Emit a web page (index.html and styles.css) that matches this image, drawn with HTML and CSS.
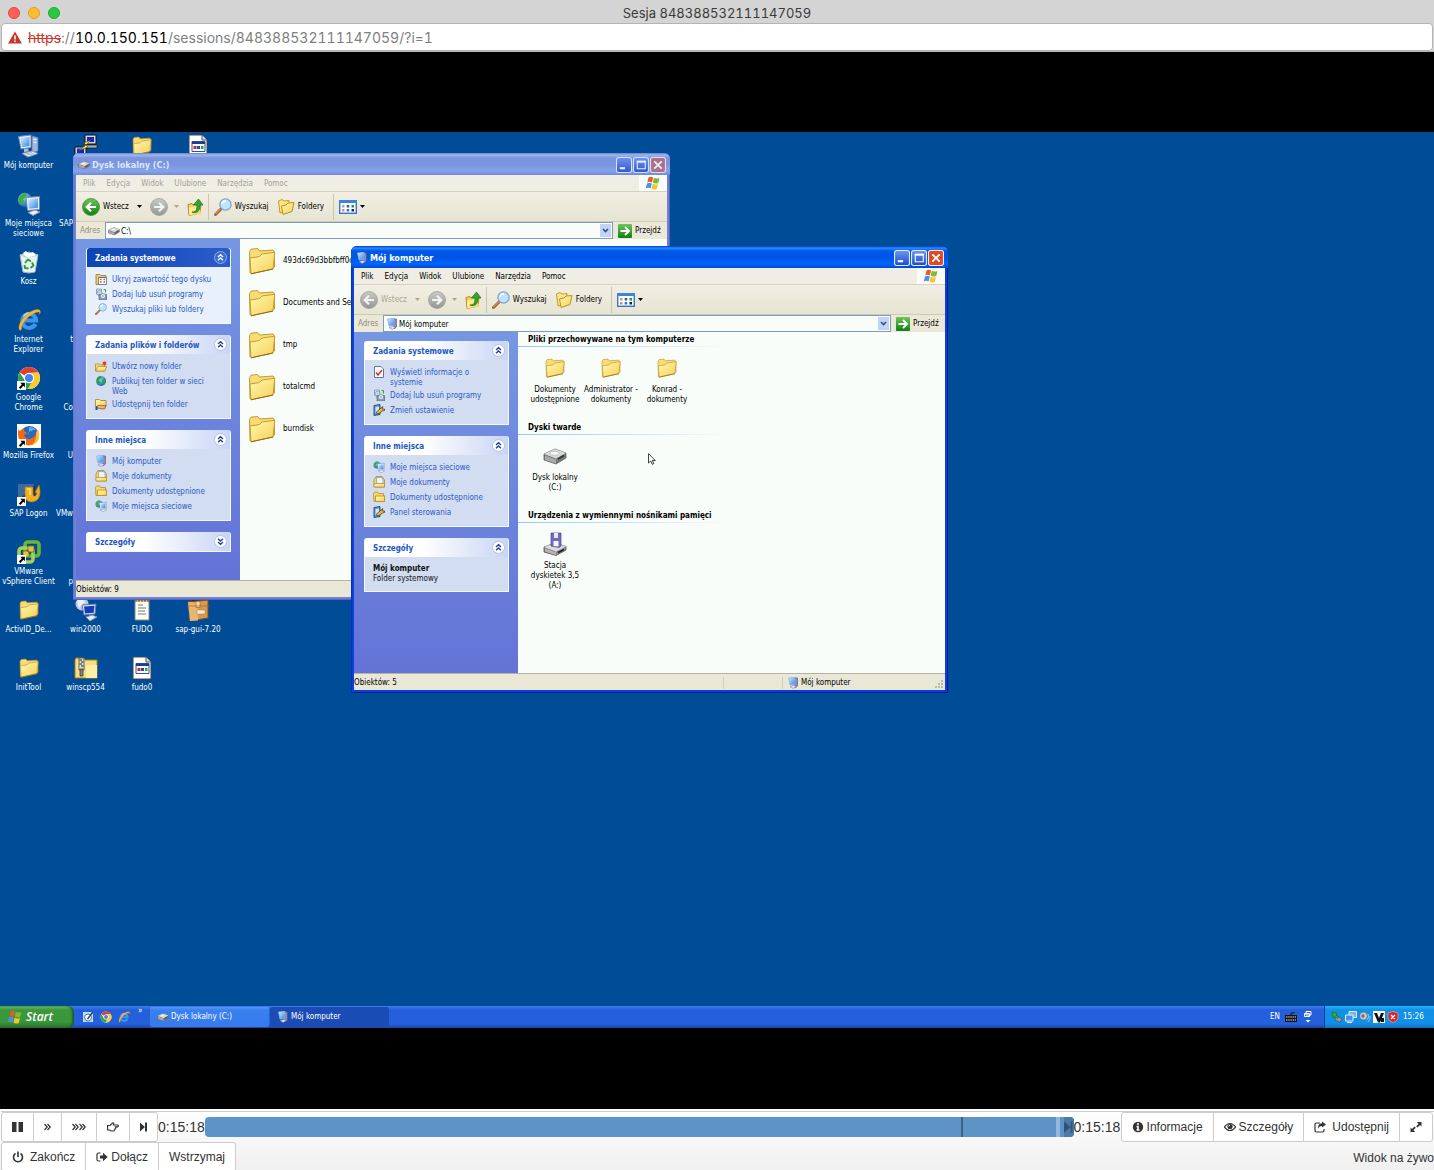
FILE: index.html
```html
<!DOCTYPE html>
<html lang="pl">
<head>
<meta charset="utf-8">
<title>Sesja 848388532111147059</title>
<link rel="stylesheet" href="styles.css">
</head>
<body>

<svg class="sprite" aria-hidden="true">
  <defs>
    <linearGradient id="gFolder" x1="0" y1="0" x2="1" y2="1"><stop offset="0" stop-color="#fff9ae"/><stop offset="1" stop-color="#f6cf58"/></linearGradient>
    <linearGradient id="gScreen" x1="0" y1="0" x2="1" y2="1"><stop offset="0" stop-color="#d9f2ff"/><stop offset="1" stop-color="#2f86e0"/></linearGradient>
    <linearGradient id="gGreen" x1="0" y1="0" x2="0" y2="1"><stop offset="0" stop-color="#6cc65c"/><stop offset="1" stop-color="#127f12"/></linearGradient>
    <linearGradient id="gGray" x1="0" y1="0" x2="0" y2="1"><stop offset="0" stop-color="#c9c9c5"/><stop offset="1" stop-color="#969692"/></linearGradient>
    <radialGradient id="gGlobe" cx=".35" cy=".3" r=".8"><stop offset="0" stop-color="#8de0ff"/><stop offset="1" stop-color="#0b50b0"/></radialGradient>
    <linearGradient id="gBlue" x1="0" y1="0" x2="0" y2="1"><stop offset="0" stop-color="#6f95f5"/><stop offset="1" stop-color="#1c4bd0"/></linearGradient>
  </defs>
  <symbol id="folder" viewBox="0 0 28 28">
    <path d="M1.500 4.500 3 2.200l6.500-.7 2 2.500L25 3l1.500 2v15L2 26z" fill="#f7dc78" stroke="#c49a2c"/>
    <path d="M2 11l9.500-1.500L14 7l12.800-1.800L25 22 3 26.800z" fill="url(#gFolder)" stroke="#c79c2e"/>
    <path d="M25 22 3 26.800" stroke="#8d6a15" fill="none"/>
  </symbol>
  <symbol id="folders" viewBox="0 0 18 18">
    <path d="M1.500 3 5 1.500 7 3l5-.5V12l-9 3z" fill="#fbe68c" stroke="#c79a25"/>
    <path d="M4.500 8 9 7l2-2 6-.5-2 9-9 3z" fill="url(#gFolder)" stroke="#c08f1e"/>
  </symbol>
  <symbol id="folder-flat" viewBox="0 0 12 12">
    <path d="M.5 2.500 1.500 1h3l1 1.500h5V5H12v5.500H1z" fill="#f5d872" stroke="#b98a1c" stroke-width=".8"/>
    <path d="M2.500 5h9v5.500h-9z" fill="url(#gFolder)" stroke="#b98a1c" stroke-width=".8"/>
  </symbol>
  <symbol id="docs-folder" viewBox="0 0 12 12">
    <path d="M1 4l2-3.500h6L11.500 4v7H1z" fill="#f5d872" stroke="#b98a1c" stroke-width=".8"/>
    <path d="M3.500 1.500h5l1.500 2V8h-6.500z" fill="#e8f4ff" stroke="#6f9ac9" stroke-width=".7"/>
    <path d="M1 7.500h10.500V11H1z" fill="url(#gFolder)" stroke="#b98a1c" stroke-width=".7"/>
  </symbol>
  <symbol id="new-folder" viewBox="0 0 12 12">
    <path d="M.5 4h4l1 1H10v6H.5z" fill="#f5d872" stroke="#b98a1c" stroke-width=".8"/><path d="M.8 11 3 6.500h9L9.800 11z" fill="url(#gFolder)" stroke="#b98a1c" stroke-width=".7"/>
    <path d="M9 .3l.7 1.700 1.800-.5-.6 1.700 1.100 1.300-1.800.1L9.500 6 8.600 4.600 7 4.400l1-1.300L7.500 1.500 9 2z" fill="#e23a1a"/>
  </symbol>
  <symbol id="share-folder" viewBox="0 0 12 12">
    <path d="M.5 1.500h4l1 1H11v6H.5z" fill="url(#gFolder)" stroke="#a97c16" stroke-width=".8"/><path d="M1 9c3-3 5-1 10-1.500L9.500 11 4 10.500z" fill="#e9b27b" stroke="#7a4b16" stroke-width=".7"/><path d="M.5 8.500h2V12h-2z" fill="#274a9a"/>
  </symbol>
  <symbol id="hide-disk" viewBox="0 0 12 12">
    <path d="M1 1.500h4l1 1h5v9H1z" fill="#f0cd62" stroke="#9b7419" stroke-width=".8"/><path d="M3.500 4.500h8v7h-8z" fill="#fff" stroke="#5b6f92" stroke-width=".8"/><path d="M5 6.500h1.500M8.500 6.500H10M5 9h1.500M8.500 9H10" stroke="#c05030" stroke-width="1.300"/><path d="M3.500 4.500h8" stroke="#3b72c8"/>
  </symbol>
  <symbol id="programs" viewBox="0 0 12 12">
    <path d="M1.500 1h5v5h-5z" fill="#dfe9f7" stroke="#7688a8" stroke-width=".7"/><circle cx="4.500" cy="5" r="2.700" fill="#c6d6ea" stroke="#6b7f9e" stroke-width=".6"/><path d="M4 6.500h7.500V12H4z" fill="#8aa0c0" stroke="#4c6285" stroke-width=".7"/><circle cx="8" cy="8" r="2.500" fill="#eef3fa" stroke="#5f7496" stroke-width=".6"/><circle cx="8" cy="8" r=".8" fill="#4f9d3a"/><path d="M8.500 1.500h2v3" fill="none" stroke="#3f9d33"/>
  </symbol>
  <symbol id="search" viewBox="0 0 18 18">
    <path d="M1.500 16.500 7 11" stroke="#a8643b" stroke-width="3" stroke-linecap="round"/><path d="M1.500 16 6.500 11" stroke="#e4a57c" stroke-width="1"/>
    <circle cx="11.500" cy="6.500" r="5.600" fill="#bfe3fb" stroke="#7fa6d0" stroke-width="1.300"/><path d="M8 6a4 4 0 0 1 4-3.200" stroke="#fff" stroke-width="1.800" fill="none"/>
  </symbol>
  <symbol id="info-doc" viewBox="0 0 12 12">
    <path d="M1.500.5H8L10.500 3v8.500h-9z" fill="#fff" stroke="#5d78a8"/><path d="M3 6.500 5 9l4-5" fill="none" stroke="#e0361d" stroke-width="1.600"/>
  </symbol>
  <symbol id="settings" viewBox="0 0 12 12">
    <path d="M1 1.500 7 .5v10L1 11.500z" fill="#5c94dd" stroke="#27446f" stroke-width=".9"/><path d="M2.500 3 6 2.500v6L2.500 9z" fill="#cfe6ff"/><path d="M3 8.500 8 4l2-1.500L9 5h2.500v1.500L9.500 7 5 10z" fill="#f0b93c" stroke="#3b3320" stroke-width=".7"/>
  </symbol>
  <symbol id="globe" viewBox="0 0 12 12">
    <circle cx="6" cy="6" r="5" fill="url(#gGlobe)"/><path d="M2 3q2-2.500 4-2l.5 2L4 5 5 8 3 9.500Q.8 7 2 3zM8 4l3 .5q.3 3-2 5.500L7 7.500z" fill="#31a238"/>
  </symbol>
  <symbol id="computer" viewBox="0 0 24 24">
    <path d="M15 2l6 1.500V17l-6 2z" fill="#9fb6de" stroke="#5773ac" stroke-width=".8"/><path d="M16.500 5l3 .7M16.500 8l3 .5" stroke="#fff"/>
    <path d="M1.500 2.500 14 1v12.500L4 15z" fill="#e9eef9" stroke="#7387b5"/><path d="M3.200 4 12.500 3v9L5 13.200z" fill="url(#gScreen)"/>
    <path d="M7 15l4-.5 1 3-5 .5z" fill="#b0bad4"/><path d="M5 19.500 15 17l6 2.500L11 23z" fill="#eef1f9" stroke="#8a96b8"/><path d="M8 20l7-1.500M10 21l7-1.500" stroke="#a9b2cb"/>
  </symbol>
  <symbol id="pc" viewBox="0 0 12 12">
    <path d="M7.500.7 10.500 1v8L8 11z" fill="#8c86c0" stroke="#534e89" stroke-width=".6"/><path d="M1.500 1 8 .3V7.500L3 8z" fill="url(#gScreen)" stroke="#8fb4e4" stroke-width=".8"/><path d="M3 9.500 7 8.500l2.500 1L6 11.500z" fill="#e7e9f5" stroke="#7d7ba5" stroke-width=".6"/>
  </symbol>
  <symbol id="network" viewBox="0 0 24 24">
    <circle cx="8" cy="8" r="7.200" fill="url(#gGlobe)"/><path d="M3 4q4-4 7-2.500L9 5 6 7l2 4-3 2Q-.5 9 3 4z" fill="#3fae3d"/>
    <path d="M9 5.500 22.500 4.500v13L10.500 18.500z" fill="#e9eef9" stroke="#6f86b8"/><path d="M11 7.200 21 6.300v9.500l-9 .9z" fill="url(#gScreen)"/><path d="M11 20.500l7-2.500 5 2-7 3.500z" fill="#eef1f9" stroke="#8490b5"/>
  </symbol>
  <symbol id="recycle" viewBox="0 0 24 24">
    <path d="M3 5l9-3 9 3-3 17-6 1-6-1z" fill="#e9f3f7" stroke="#9db8c8"/><path d="M3 5l8 2.500L21 5" fill="none" stroke="#b7ccd8"/><path d="M6 3l3-2 3 3 4-2 3 3-8 3z" fill="#fff"/>
    <path d="M8 13l3-3.500 3 2M15 12.500l1.500 3-3 2.500M11.500 18.500 8 18l-.5-3" fill="none" stroke="#26a032" stroke-width="1.900"/>
  </symbol>
  <symbol id="ie" viewBox="0 0 24 24">
    <path d="M18.500 16A7 7 0 1 1 19.200 12.500H7" fill="none" stroke="#3c97ec" stroke-width="4"/><path d="M6.500 8.500q3-5 9-3" stroke="#b9e4ff" stroke-width="1.400" fill="none"/>
    <path d="M3.500 22.500C-2 20 8 3 20 1.500c4.500-.5 3.500 3.500 2.500 5 .5-3-1-3-3.500-2C11 7 3.500 17 4.800 20.500z" fill="#f4b92f" stroke="#d6900f" stroke-width=".4"/>
  </symbol>
  <symbol id="chrome" viewBox="0 0 24 24">
    <circle cx="12" cy="12" r="11" fill="#fff"/><path d="M12 12 2.500 6.500A11 11 0 0 1 21.500 6.500L12 7z" fill="#e2402f"/><path d="M2.500 6.500A11 11 0 0 0 11 23l5-8.500-4-2.500-5 1z" fill="#2da24c"/><path d="M21.500 6.500A11 11 0 0 1 11 23l6-11-3-5z" fill="#fbcb2f"/><circle cx="12" cy="12" r="5.200" fill="#fff"/><circle cx="12" cy="12" r="4" fill="#4285f4"/>
  </symbol>
  <symbol id="firefox" viewBox="0 0 24 24">
    <path d="M0 0h24v24H0z" fill="#fff"/><circle cx="12.500" cy="11.500" r="9.500" fill="#2c68b8"/><path d="M12 3q5 0 7 3-3-1-4 1-5 0-3 4z" fill="#55b4ec"/>
    <path d="M2 4c0 2 0 2.500 1 3 1-1.500 2-2 4-2-.5 1.500 0 2.500 2 3l1 1.500-3 1.500c1 4 5 5 8 3 3-1.500 5-4 4-9 3 3 4 7 2 11-3 6-11 7-16 3-4-3-5-9-3-15z" fill="#ef6a17"/><path d="M21 6c3 5 1 13-6 15 3-3 5-7 4-12z" fill="#fbc12f"/>
  </symbol>
  <symbol id="sap" viewBox="0 0 24 24">
    <path d="M1 2h17v17H1z" fill="#163a63"/><path d="M1 2h17L1 19z" fill="#3d6b9c"/><path d="M8 5h8v7c0 3 3 3 4-1l-2-.5L22 3c2 7 2 16-7 17-6 0-7-4-7-9z" fill="#f3ae21" stroke="#b77405" stroke-width=".7"/><path d="M10 7h3v6" stroke="#ffe08a" fill="none" stroke-width="1.500"/>
  </symbol>
  <symbol id="vmware" viewBox="0 0 24 24">
    <rect x="8" y="2" width="14" height="14" rx="3" fill="none" stroke="#6bb536" stroke-width="3.600"/><rect x="2" y="8" width="14" height="14" rx="3" fill="none" stroke="#a4cf5c" stroke-width="3.600"/><path d="M11 6h6v6h-6zM6 11h6v6H6z" fill="#f9b93a" stroke="#4b7320" stroke-width=".8"/>
  </symbol>
  <symbol id="putty" viewBox="0 0 24 24">
    <path d="M11 1h11v9H11zM1 13h11v8H1z" fill="#d9d9d9" stroke="#111"/><path d="M13 3h7v5h-7zM3 14.500h7V19H3z" fill="#1424c8"/><path d="M11 11h12v3H11zM1 21h12v2H1z" fill="#aaa" stroke="#111" stroke-width=".6"/><path d="M17 6 10 9l2 2-8 6 10-4-2-2z" fill="#ffe81c" stroke="#333" stroke-width=".5"/>
  </symbol>
  <symbol id="image-doc" viewBox="0 0 24 24">
    <path d="M3 1h13l5 5v17H3z" fill="#fff" stroke="#444"/><path d="M16 1v5h5" fill="#ddd" stroke="#555"/><path d="M6 7.500h13v10H6z" fill="#fff" stroke="#2b56a8"/><path d="M6 7.500h13v2.500H6z" fill="#203c88"/><path d="M7.500 12h3v3h-3z" fill="#d22"/><path d="M11 12h3v3h-3z" fill="#34b"/><path d="M15 12h2.500v3H15z" fill="#2a4"/>
  </symbol>
  <symbol id="notes" viewBox="0 0 24 24">
    <path d="M5 2h14v20H5z" fill="#fdfdf6" stroke="#888"/><path d="M5 1.500h14v2H5z" fill="#c9a53a"/><path d="M6 1v3M9 1v3M12 1v3M15 1v3M18 1v3" stroke="#333" stroke-width=".8"/><path d="M8 7h5M8 10h8M8 13h7M8 16h8" stroke="#777"/>
  </symbol>
  <symbol id="rdp" viewBox="0 0 24 24">
    <circle cx="8" cy="6" r="6.500" fill="#b9cbe4"/><path d="M3 3q5-4 8 1l-6 6z" fill="#eaf2fc"/><path d="M8 7l14-1-1 10-11 1z" fill="#dfe5f3" stroke="#6077a8"/><path d="M10 8.500l10.500-.8-.8 7-8.700.7z" fill="#173cba"/><path d="M12 19l6-2 5 2-7 4z" fill="#e5e9f4" stroke="#8290b5"/>
  </symbol>
  <symbol id="box" viewBox="0 0 24 24">
    <path d="M6 0h12v8H6z" fill="#1c2d57"/><path d="M2 4l20-2v18L4 23z" fill="#d89a52" stroke="#7f4e1a"/><path d="M2 4l10 1v17.500L4 23z" fill="#e9b672"/><path d="M10 3.500h4v6h-4zM1 8h22" fill="#f5dfae" stroke="#9d6729" stroke-width=".7"/><path d="M11 12h8v4h-8z" fill="#f6ead2" stroke="#a87a40" stroke-width=".5"/>
  </symbol>
  <symbol id="zip" viewBox="0 0 24 24">
    <path d="M1 4l1-2h8l1 2h12v18H1z" fill="#f6df83" stroke="#a98119"/><path d="M12 9h11v13H12z" fill="#fbeea9"/><path d="M5 2h5v12H5z" fill="#ddd" stroke="#333" stroke-width=".7"/><path d="M5.500 4H8M7 6h2.500M5.500 8H8M7 10h2.500" stroke="#222"/><path d="M6 13h3v7H6z" fill="#888" stroke="#222" stroke-width=".7"/>
  </symbol>
  <symbol id="shortcut-arrow" viewBox="0 0 8 8"><path d="M0 0h8v8H0z" fill="#fff"/><path d="M3 1.500h4v4L5.700 4.300 3 7 1.700 5.700 4.300 3z" fill="#000"/></symbol>
  <symbol id="drive" viewBox="0 0 24 24">
    <path d="M1 10 12 5l11 4v5l-10 6-12-4z" fill="#777" stroke="#666" stroke-width=".8"/><path d="M1 10 12 5l11 4-10 5.500z" fill="#d9d9d9"/><path d="M2 11.500l11 4v4l-11-3.500z" fill="#a9a9a9"/><path d="M15 15l6-3.500" stroke="#333" stroke-width="1.500"/><ellipse cx="11.500" cy="9.300" rx="4.500" ry="2" fill="#fafafa" stroke="#aaa" stroke-width=".6"/>
  </symbol>
  <symbol id="floppy-drive" viewBox="0 0 24 24">
    <path d="M1 15l11-4 11 3.500V18l-10 5.500L1 20z" fill="#8c8c8c" stroke="#555" stroke-width=".8"/><path d="M1 15l11-4 11 3.500-10 5z" fill="#dcdcdc"/><path d="M2 16.500l11 4v2.500L2 19.500z" fill="#b5b5b5"/><path d="M15 20.500l6-3" stroke="#222" stroke-width="1.500"/>
    <path d="M8 1h10v13l-2 1.500L8 14z" fill="#6f6bc4" stroke="#4d4a95" stroke-width=".7"/><path d="M11 1h4v5h-4z" fill="#e6e9f7"/><path d="M10.500 9h5v5.500l-5-.5z" fill="#f5f5fb"/>
  </symbol>
  <symbol id="back" viewBox="0 0 18 18"><circle cx="9" cy="9" r="8.500" fill="url(#gGreen)" stroke="#2c8a28" stroke-width=".7"/><path d="M14 9H5M9 4.700 4.700 9 9 13.300" fill="none" stroke="#fff" stroke-width="2.200"/></symbol>
  <symbol id="back-off" viewBox="0 0 18 18"><circle cx="9" cy="9" r="8.500" fill="url(#gGray)" stroke="#9a9a96" stroke-width=".7"/><path d="M14 9H5M9 4.700 4.700 9 9 13.300" fill="none" stroke="#f4f4ef" stroke-width="2.200"/></symbol>
  <symbol id="forward-off" viewBox="0 0 18 18"><circle cx="9" cy="9" r="8.500" fill="url(#gGray)" stroke="#9a9a96" stroke-width=".7"/><path d="M4 9h9M9 4.700 13.300 9 9 13.300" fill="none" stroke="#f4f4ef" stroke-width="2.200"/></symbol>
  <symbol id="up" viewBox="0 0 18 18"><path d="M2 6.500l4-1 1 1.500 8-1-1 9-11 2.500z" fill="#f3d369" stroke="#b98a1c"/><path d="M3 10l10-2.500 2 8L3 17.500z" fill="url(#gFolder)"/><path d="M6 14c4 0 5-2 5-7H7.500L12.500 1 17 7h-3c0 6-3 9-8 7z" fill="#35a52c" stroke="#15701a" stroke-width=".7"/></symbol>
  <symbol id="views" viewBox="0 0 18 14"><rect x=".7" y=".7" width="16.600" height="12.600" fill="#fff" stroke="#2f76d0" stroke-width="1.400"/><path d="M0 0h18v3H0z" fill="#3c83dc"/><path d="M3 5h2.500v2.500H3z" fill="#9aa7c0"/><path d="M7.700 5h2.500v2.500H7.700z" fill="#3658b5"/><path d="M12.500 5H15v2.500h-2.500z" fill="#1e9b3c"/><path d="M3 9h2.500v2.500H3z" fill="#e2856b"/><path d="M7.700 9h2.500v2.500H7.700z" fill="#2f6fd0"/><path d="M12.500 9H15v2.500h-2.500z" fill="#223"/></symbol>
  <symbol id="go" viewBox="0 0 14 14"><rect width="14" height="14" rx="1" fill="url(#gGreen)"/><path d="M2.500 7h8M7 3l4 4-4 4" fill="none" stroke="#fff" stroke-width="1.800"/></symbol>
  <symbol id="caret" viewBox="0 0 5 3"><path d="M0 0h5L2.500 3z" fill="currentColor"/></symbol>
  <symbol id="chevrons-up" viewBox="0 0 13 13"><circle cx="6.500" cy="6.500" r="6" fill="#fff" stroke="#b5c2e4"/><path d="M4 6l2.500-2.300L9 6M4 9.300 6.500 7 9 9.300" fill="none" stroke="#1d3f94" stroke-width="1.300"/></symbol>
  <symbol id="chevrons-up-light" viewBox="0 0 13 13"><circle cx="6.500" cy="6.500" r="6" fill="#3d6cd0" stroke="#8eaef0"/><path d="M4 6l2.500-2.300L9 6M4 9.300 6.500 7 9 9.300" fill="none" stroke="#fff" stroke-width="1.300"/></symbol>
  <symbol id="chevrons-down" viewBox="0 0 13 13"><circle cx="6.500" cy="6.500" r="6" fill="#fff" stroke="#b5c2e4"/><path d="M4 3.700 6.500 6 9 3.700M4 7l2.500 2.300L9 7" fill="none" stroke="#1d3f94" stroke-width="1.300"/></symbol>
  <symbol id="flag" viewBox="0 0 16 14">
    <path d="M3.500 1.500Q6 0 8 1.500L7 6.500Q4.500 5 2.300 6.500z" fill="#e9592b"/><path d="M8.800 1.800Q11.500 3.300 14.500 2L13.300 7Q10.500 8.300 7.800 6.800z" fill="#7fba33"/><path d="M2 7.500Q4.500 6 6.800 7.500L5.700 12.300Q3.200 11 .8 12.300z" fill="#4c90e0"/><path d="M7.600 7.800Q10.200 9.300 13 8L11.800 13Q9 14.200 6.500 12.700z" fill="#f7c52b"/>
  </symbol>
  <symbol id="win-min" viewBox="0 0 15 15"><rect x=".5" y=".5" width="14" height="14" rx="2" fill="url(#gBlue)" stroke="#e6edff"/><path d="M3.500 10.500h5" stroke="#fff" stroke-width="2"/></symbol>
  <symbol id="win-max" viewBox="0 0 15 15"><rect x=".5" y=".5" width="14" height="14" rx="2" fill="url(#gBlue)" stroke="#e6edff"/><path d="M4 4.500h7.500v6.500H4z" fill="none" stroke="#fff"/><path d="M3.500 4.300h8.500" stroke="#fff" stroke-width="1.800"/></symbol>
  <symbol id="win-close" viewBox="0 0 15 15"><rect x=".5" y=".5" width="14" height="14" rx="2" fill="currentColor" stroke="#f6ebe8"/><path d="M4 4l7 7M11 4l-7 7" stroke="#fff" stroke-width="1.700"/></symbol>
  <symbol id="pointer" viewBox="0 0 8 12"><path d="M.5.7v9.300l2.200-2 1.500 3.300 1.500-.7-1.400-3.100h3z" fill="#fff" stroke="#111" stroke-width=".8"/></symbol>
</svg>

<header class="browser">
  <div class="browser-title">
    <div class="lights"><button class="light light-red" aria-label="Zamknij"></button><button class="light light-yellow" aria-label="Minimalizuj"></button><button class="light light-green" aria-label="Powiększ"></button></div>
    <h1>Sesja 848388532111147059</h1>
  </div>
  <div class="url">
    <svg class="warn" viewBox="0 0 14 13"><path d="M7 .5 14 12.500H0z" fill="#c5392a"/><path d="M7 4.500v4M7 9.500v1.600" stroke="#fff" stroke-width="1.500"/></svg>
    <span><s>https</s>://<b>10.0.150.151</b>/sessions/848388532111147059/?i=1</span>
  </div>
</header>

<main class="viewer">
  <div class="desktop">
    <div class="workspace">
      <div class="shortcuts">
        <button class="shortcut"><svg><use href="#computer"/></svg>Mój komputer</button>
        <button class="shortcut"><svg><use href="#network"/></svg>Moje miejsca sieciowe</button>
        <button class="shortcut"><svg><use href="#recycle"/></svg>Kosz</button>
        <button class="shortcut"><svg><use href="#ie"/></svg>Internet Explorer</button>
        <button class="shortcut"><svg><use href="#chrome"/><use href="#shortcut-arrow" x="0" y="15" width="9" height="9"/></svg>Google Chrome</button>
        <button class="shortcut"><svg><use href="#firefox"/><use href="#shortcut-arrow" x="0" y="15" width="9" height="9"/></svg>Mozilla Firefox</button>
        <button class="shortcut"><svg><use href="#sap"/><use href="#shortcut-arrow" x="0" y="15" width="9" height="9"/></svg>SAP Logon</button>
        <button class="shortcut"><svg><use href="#vmware"/><use href="#shortcut-arrow" x="0" y="15" width="9" height="9"/></svg>VMware vSphere Client</button>
        <button class="shortcut small"><svg><use href="#folder"/></svg>ActivID_De...</button>
        <button class="shortcut small"><svg><use href="#folder"/></svg>InitTool</button>
        <button class="shortcut" aria-label="PuTTY"><svg><use href="#putty"/></svg></button>
        <button class="shortcut covered">SAP</button>
        <span></span>
        <button class="shortcut covered">t</button>
        <button class="shortcut covered second-line">Co</button>
        <button class="shortcut covered">U</button>
        <button class="shortcut covered">VMw</button>
        <button class="shortcut covered second-line">p</button>
        <button class="shortcut"><svg><use href="#rdp"/></svg>win2000</button>
        <button class="shortcut"><svg><use href="#zip"/></svg>winscp554</button>
        <button class="shortcut small" aria-label="Folder"><svg><use href="#folder"/></svg></button>
        <button class="shortcut row-9"><svg><use href="#notes"/></svg>FUDO</button>
        <button class="shortcut"><svg><use href="#image-doc"/></svg>fudo0</button>
        <button class="shortcut" aria-label="Obraz"><svg><use href="#image-doc"/></svg></button>
        <button class="shortcut row-9"><svg><use href="#box"/></svg>sap-gui-7.20</button>
      </div>

      <section class="window inactive disk">
        <header class="title"><svg class="i12"><use href="#drive"/></svg><h2>Dysk lokalny (C:)</h2>
          <button aria-label="Minimalizuj"><svg><use href="#win-min"/></svg></button><button aria-label="Maksymalizuj"><svg><use href="#win-max"/></svg></button><button class="close" aria-label="Zamknij"><svg><use href="#win-close"/></svg></button>
        </header>
        <nav class="menu"><button>Plik</button><button>Edycja</button><button>Widok</button><button>Ulubione</button><button>Narzędzia</button><button>Pomoc</button><span class="brand"><svg><use href="#flag"/></svg></span></nav>
        <div class="toolbar">
          <button class="tool"><svg class="i18"><use href="#back"/></svg>Wstecz</button><button class="drop" aria-label="Historia wstecz"><svg><use href="#caret"/></svg></button>
          <button class="tool off" aria-label="Dalej"><svg class="i18"><use href="#forward-off"/></svg></button><button class="drop short off" aria-label="Historia dalej"><svg><use href="#caret"/></svg></button>
          <button class="tool" aria-label="W górę"><svg class="i18"><use href="#up"/></svg></button>
          <i class="sep"></i>
          <button class="tool"><svg class="i18"><use href="#search"/></svg>Wyszukaj</button>
          <button class="tool folders"><svg class="i18"><use href="#folders"/></svg>Foldery</button>
          <i class="sep"></i>
          <button class="tool views" aria-label="Widoki"><svg class="i18"><use href="#views"/></svg><svg class="caret"><use href="#caret"/></svg></button>
        </div>
        <div class="address">
          <label for="addr1">Adres</label>
          <div class="field"><svg class="i12"><use href="#drive"/></svg><input id="addr1" value="C:\"><button class="pick" aria-label="Rozwiń"><svg viewBox="0 0 11 13"><path d="M3 5l2.500 2.500L8 5" fill="none" stroke="#35517f" stroke-width="1.600"/></svg></button></div>
          <button class="go"><svg><use href="#go"/></svg>Przejdź</button>
        </div>
        <div class="explorer">
          <aside>
            <section class="panel primary">
              <h3>Zadania systemowe<svg><use href="#chevrons-up-light"/></svg></h3>
              <ul>
                <li><svg class="i12"><use href="#hide-disk"/></svg><a href="#">Ukryj zawartość tego dysku</a></li>
                <li><svg class="i12"><use href="#programs"/></svg><a href="#">Dodaj lub usuń programy</a></li>
                <li><svg class="i12"><use href="#search"/></svg><a href="#">Wyszukaj pliki lub foldery</a></li>
              </ul>
            </section>
            <section class="panel">
              <h3>Zadania plików i folderów<svg><use href="#chevrons-up"/></svg></h3>
              <ul>
                <li><svg class="i12"><use href="#new-folder"/></svg><a href="#">Utwórz nowy folder</a></li>
                <li><svg class="i12"><use href="#globe"/></svg><a href="#">Publikuj ten folder w sieci Web</a></li>
                <li><svg class="i12"><use href="#share-folder"/></svg><a href="#">Udostępnij ten folder</a></li>
              </ul>
            </section>
            <section class="panel">
              <h3>Inne miejsca<svg><use href="#chevrons-up"/></svg></h3>
              <ul>
                <li><svg class="i12"><use href="#pc"/></svg><a href="#">Mój komputer</a></li>
                <li><svg class="i12"><use href="#docs-folder"/></svg><a href="#">Moje dokumenty</a></li>
                <li><svg class="i12"><use href="#folder-flat"/></svg><a href="#">Dokumenty udostępnione</a></li>
                <li><svg class="i12"><use href="#network"/></svg><a href="#">Moje miejsca sieciowe</a></li>
              </ul>
            </section>
            <section class="panel"><h3>Szczegóły<svg><use href="#chevrons-down"/></svg></h3></section>
          </aside>
          <div class="files">
            <button><svg><use href="#folder"/></svg>493dc69d3bbfbff0c</button>
            <button><svg><use href="#folder"/></svg>Documents and Settings</button>
            <button><svg><use href="#folder"/></svg>tmp</button>
            <button><svg><use href="#folder"/></svg>totalcmd</button>
            <button><svg><use href="#folder"/></svg>burndisk</button>
          </div>
        </div>
        <footer class="status"><span>Obiektów: 9</span></footer>
      </section>

      <section class="window mycomputer">
        <header class="title"><svg class="i12"><use href="#pc"/></svg><h2>Mój komputer</h2>
          <button aria-label="Minimalizuj"><svg><use href="#win-min"/></svg></button><button aria-label="Maksymalizuj"><svg><use href="#win-max"/></svg></button><button class="close" aria-label="Zamknij"><svg><use href="#win-close"/></svg></button>
        </header>
        <nav class="menu"><button>Plik</button><button>Edycja</button><button>Widok</button><button>Ulubione</button><button>Narzędzia</button><button>Pomoc</button><span class="brand"><svg><use href="#flag"/></svg></span></nav>
        <div class="toolbar">
          <button class="tool off"><svg class="i18"><use href="#back-off"/></svg>Wstecz</button><button class="drop off" aria-label="Historia wstecz"><svg><use href="#caret"/></svg></button>
          <button class="tool off" aria-label="Dalej"><svg class="i18"><use href="#forward-off"/></svg></button><button class="drop short off" aria-label="Historia dalej"><svg><use href="#caret"/></svg></button>
          <button class="tool" aria-label="W górę"><svg class="i18"><use href="#up"/></svg></button>
          <i class="sep"></i>
          <button class="tool"><svg class="i18"><use href="#search"/></svg>Wyszukaj</button>
          <button class="tool folders"><svg class="i18"><use href="#folders"/></svg>Foldery</button>
          <i class="sep"></i>
          <button class="tool views" aria-label="Widoki"><svg class="i18"><use href="#views"/></svg><svg class="caret"><use href="#caret"/></svg></button>
        </div>
        <div class="address">
          <label for="addr2">Adres</label>
          <div class="field"><svg class="i12"><use href="#pc"/></svg><input id="addr2" value="Mój komputer"><button class="pick" aria-label="Rozwiń"><svg viewBox="0 0 11 13"><path d="M3 5l2.500 2.500L8 5" fill="none" stroke="#35517f" stroke-width="1.600"/></svg></button></div>
          <button class="go"><svg><use href="#go"/></svg>Przejdź</button>
        </div>
        <div class="explorer">
          <aside>
            <section class="panel">
              <h3>Zadania systemowe<svg><use href="#chevrons-up"/></svg></h3>
              <ul>
                <li><svg class="i12"><use href="#info-doc"/></svg><a href="#">Wyświetl informacje o systemie</a></li>
                <li><svg class="i12"><use href="#programs"/></svg><a href="#">Dodaj lub usuń programy</a></li>
                <li><svg class="i12"><use href="#settings"/></svg><a href="#">Zmień ustawienie</a></li>
              </ul>
            </section>
            <section class="panel">
              <h3>Inne miejsca<svg><use href="#chevrons-up"/></svg></h3>
              <ul>
                <li><svg class="i12"><use href="#network"/></svg><a href="#">Moje miejsca sieciowe</a></li>
                <li><svg class="i12"><use href="#docs-folder"/></svg><a href="#">Moje dokumenty</a></li>
                <li><svg class="i12"><use href="#folder-flat"/></svg><a href="#">Dokumenty udostępnione</a></li>
                <li><svg class="i12"><use href="#settings"/></svg><a href="#">Panel sterowania</a></li>
              </ul>
            </section>
            <section class="panel">
              <h3>Szczegóły<svg><use href="#chevrons-up"/></svg></h3>
              <p><b>Mój komputer</b><br>Folder systemowy</p>
            </section>
          </aside>
          <div class="groups">
            <section class="group"><h3>Pliki przechowywane na tym komputerze</h3>
              <div class="tiles">
                <button class="tile small"><svg><use href="#folder"/></svg>Dokumenty udostępnione</button>
                <button class="tile small"><svg><use href="#folder"/></svg>Administrator - dokumenty</button>
                <button class="tile small"><svg><use href="#folder"/></svg>Konrad - dokumenty</button>
              </div>
            </section>
            <section class="group"><h3>Dyski twarde</h3>
              <div class="tiles"><button class="tile"><svg><use href="#drive"/></svg>Dysk lokalny (C:)</button></div>
            </section>
            <section class="group"><h3>Urządzenia z wymiennymi nośnikami pamięci</h3>
              <div class="tiles"><button class="tile"><svg><use href="#floppy-drive"/></svg>Stacja dyskietek 3,5 (A:)</button></div>
            </section>
          </div>
        </div>
        <footer class="status"><span>Obiektów: 5</span><i></i><span class="zone"><svg class="i12"><use href="#pc"/></svg>Mój komputer</span>
          <svg class="grip" viewBox="0 0 8 8"><path d="M6 0h2v2H6zM3 3h2v2H3zM6 3h2v2H6zM0 6h2v2H0zM3 6h2v2H3zM6 6h2v2H6z" fill="#bdb9a2"/></svg></footer>
      </section>

      <svg class="pointer"><use href="#pointer"/></svg>
    </div>

    <footer class="taskbar">
      <button class="start"><svg><use href="#flag"/></svg>Start</button>
      <div class="quick">
        <button aria-label="Pokaż pulpit"><svg class="i12" viewBox="0 0 12 12"><path d="M1 1h8l2 2v8H1z" fill="#bfe0f8"/><circle cx="6" cy="6.500" r="3.500" fill="#fff" stroke="#3c6fb0"/><path d="M5.500 8 10.500 1.500" stroke="#345" stroke-width="1.400"/></svg></button>
        <button aria-label="Chrome"><svg class="i12"><use href="#chrome"/></svg></button>
        <button aria-label="Internet Explorer"><svg class="i12"><use href="#ie"/></svg></button>
        <span>»</span>
      </div>
      <button class="task"><svg class="i12"><use href="#drive"/></svg>Dysk lokalny (C:)</button>
      <button class="task pressed"><svg class="i12"><use href="#pc"/></svg>Mój komputer</button>
      <div class="lang"><span>EN</span>
        <svg class="i12" viewBox="0 0 12 12"><path d="M0 4h12v7H0z" fill="#111"/><path d="M1 6h10M1 9h10" stroke="#dfe8f5" stroke-width="1.200" stroke-dasharray="1.500 .7"/><path d="M6 4V2h3V1" stroke="#111" fill="none"/></svg>
        <svg class="i12" viewBox="0 0 12 12"><path d="M4 .5h5v3.500H4zM2.500 2.500h5v3h-5z" fill="#2a5ed4" stroke="#fff"/><path d="M3.500 9h5L6 11.500z" fill="#fff"/></svg>
      </div>
      <div class="tray">
        <svg class="i12" viewBox="0 0 12 12"><path d="M5 4l6 4-2 3.500L4 9z" fill="#8e9aa8" stroke="#3c4653" stroke-width=".6"/><path d="M1 1l5 1-1 2 3 2-1.500 1.500-3-2L2 7z" fill="#2fb02f" stroke="#126512" stroke-width=".5"/></svg>
        <svg class="i12" viewBox="0 0 12 12"><path d="M4 .5h7.500v6H4z" fill="#78b6ee" stroke="#dcebfa"/><path d="M.5 4H8v6H.5z" fill="#4a90e0" stroke="#e6f0fb"/><path d="M2 11.500h5" stroke="#dbe5f2"/></svg>
        <svg class="i12" viewBox="0 0 12 12"><circle cx="4.500" cy="5" r="4" fill="#c5cad2" stroke="#5a626e" stroke-width=".7"/><circle cx="4" cy="5" r="1.700" fill="#6a7280"/><path d="M9 3q2 3-1 6M11 5q1 3-2 6" fill="none" stroke="#a9c4ea" stroke-width=".9"/></svg>
        <svg class="i12" viewBox="0 0 12 12"><path d="M0 0h12v12H0z" fill="#fff"/><path d="M1 2h3l2 5 2-5h3L7 11.500H5z" fill="#111"/><path d="M8 7h3v4H8z" fill="#111"/></svg>
        <svg class="i12" viewBox="0 0 12 12"><path d="M6 .5 11 2v4q0 4-5 5.500Q1 10 1 6V2z" fill="#d8242c" stroke="#f4b3b3" stroke-width=".6"/><path d="M4 4l4 4M8 4 4 8" stroke="#fff" stroke-width="1.400"/></svg>
        <time>15:26</time>
      </div>
    </footer>
  </div>
</main>

<footer class="controls">
  <div class="row">
    <div class="group-buttons">
      <button aria-label="Pauza"><svg viewBox="0 0 11 12"><path d="M0 1h4.500v10H0zM6.500 1H11v10H6.500z"/></svg></button>
      <button aria-label="Szybciej"><svg viewBox="0 0 7 12"><path d="M.5 3l2.700 3-2.700 3M3.500 3l2.700 3-2.700 3" class="line"/></svg></button>
      <button aria-label="Najszybciej"><svg viewBox="0 0 14 12"><path d="M.5 3l2.700 3-2.700 3M3.500 3l2.700 3-2.700 3M7.500 3l2.700 3-2.700 3M10.500 3l2.700 3-2.700 3" class="line"/></svg></button>
      <button aria-label="Krok"><svg viewBox="0 0 12 12"><path d="M.6 4.500H3L5.500 2Q7.300 1.500 6.500 4h4.300q1.200.9 0 1.800H8.500q.8.900-.3 1.700.3 1-.7 1.400 0 1.100-1.200 1.100H4L2.700 9H.6z" class="line"/></svg></button>
      <button aria-label="Na koniec"><svg viewBox="0 0 7 12"><path d="M0 1.500 5 6V1.500h2v9H5V6l-5 4.500z"/></svg></button>
    </div>
    <time>0:15:18</time>
    <div class="timeline">
      <input type="range" min="0" max="918" value="918" aria-label="Pozycja nagrania">
      <i class="mark"></i><i class="mark light-mark"></i>
      <svg class="end" viewBox="0 0 10 14"><path d="M0 1l7.500 6L0 13zM7.500 1h2v12h-2z"/></svg>
    </div>
    <time>0:15:18</time>
    <div class="group-buttons">
      <button><svg viewBox="0 0 12 12"><circle cx="6" cy="6" r="5.200"/><path d="M6 2v2M4.500 5.500H6V9M4.500 9h3" fill="none" stroke="#fff" stroke-width="1.600"/></svg>Informacje</button>
      <button><svg viewBox="0 0 12 12"><path d="M.4 6Q3 2.500 6 2.500T11.600 6Q9 9.500 6 9.500T.4 6z" class="line"/><circle cx="6" cy="5.500" r="2.600"/><path d="M4.700 5.500Q4.700 4.200 6 4.200" fill="none" stroke="#fff" stroke-width=".8"/></svg>Szczegóły</button>
      <button class="roomy"><svg viewBox="0 0 12 12"><path d="M6 2H2.500Q1 2 1 3.500v6Q1 11 2.500 11h6Q10 11 10 9.500V8" class="line"/><path d="M8 .5 12 3.500 8 6.500V5Q5 5 4 8 3.500 2.500 8 2.200z"/></svg>Udostępnij</button>
      <button aria-label="Pełny ekran"><svg viewBox="0 0 12 12"><path d="M7 1h4.500v4.500L10 4 7.500 6.500l-1.300-1.200L8.500 3zM5 11H.5V6.500L2 8l2.500-2.500 1.300 1.200L3.500 9z"/></svg></button>
    </div>
  </div>
  <div class="row second">
    <div class="group-buttons">
      <button class="roomy"><svg viewBox="0 0 12 12"><path d="M3.500 2.500a4.500 4.500 0 1 0 5 0M6 .5V6" fill="none" stroke="#333" stroke-width="1.600"/></svg>Zakończ</button>
      <button><svg viewBox="0 0 12 12"><path d="M4.500 2H2.500Q1 2 1 3.500v5Q1 10 2.500 10h2" class="line"/><path d="M4 4.500h3V1.800L11.700 6 7 10.200V7.500H4z"/></svg>Dołącz</button>
      <button>Wstrzymaj</button>
    </div>
    <span class="live">Widok na żywo</span>
  </div>
</footer>
</body>
</html>
```
FILE: styles.css
```css
* { box-sizing: border-box; }
body { margin: 0; height: 100vh; display: flex; flex-direction: column; overflow: hidden; background: #000; font-family: "Liberation Sans", Arial, sans-serif; color: #333; }
h1, h2, h3, p, ul { margin: 0; padding: 0; font-size: inherit; }
ul { list-style: none; }
button { margin: 0; padding: 0; border: 0; background: none; font: inherit; color: inherit; }
svg { display: block; flex: none; }
.sprite { position: absolute; width: 0; height: 0; }
.i12 { width: 12px; height: 12px; }
.i18 { width: 18px; height: 18px; }

/* browser frame */
.browser { flex: none; background: #d4d4d4; font-family: Inter, sans-serif; font-variant-numeric: tabular-nums; border-bottom: 1px solid #bbb; }
.browser-title { display: grid; grid-template-columns: 1fr auto 1fr; align-items: center; height: 23px; padding: 2px 8px 0; }
.lights { display: flex; gap: 8px; }
.light { width: 12px; height: 12px; border-radius: 50%; border: 1px solid #e2463f; background: #ff5f57; }
.light-yellow { background: #ffbd2e; border-color: #dfa023; }
.light-green { background: #28c940; border-color: #1aab29; }
.browser-title h1 { font-size: 13px; line-height: 20px; font-weight: 400; color: #3a3a3a; }
.url { display: flex; align-items: center; gap: 6px; height: 28px; margin: 0 1px; padding: 0 6px; border: 1px solid #b4b4b4; border-radius: 4px; background: #fff; font-size: 14px; color: #808080; }
.url s { color: #c5392a; }
.url b { font-weight: 400; color: #000; }
.warn { width: 14px; height: 13px; }

/* recorded desktop */
.viewer { flex: 1; min-height: 0; display: flex; padding: 80px 0 81px; }
.desktop { flex: 1; display: flex; flex-direction: column; background: #004c97; color: #fff; font-family: "DejaVu Sans Condensed", "Noto Sans", sans-serif; font-size: 8px; line-height: 10px; }
.workspace { position: relative; flex: 1; }
.shortcuts { display: grid; grid-template: repeat(10, 58px) / 57px 57px 56px 56px; grid-auto-flow: column; padding-top: 2px; }
.shortcut { display: flex; flex-direction: column; align-items: center; gap: 3px; padding: 0 1px; line-height: 10px; }
.shortcut svg { width: 24px; height: 24px; }
.small svg { width: 20px; height: 24px; }
.covered { align-items: flex-end; width: 17px; padding-top: 27px; }
.second-line { padding-top: 37px; }
.row-9 { grid-row: 9; }

/* windows */
.window { position: absolute; display: flex; flex-direction: column; width: 597px; height: 447px; padding: 0 3px 3px; border-radius: 6px 6px 0 0; background: #0c3fd8; color: #000; box-shadow: inset -1px -1px #0018a0, inset 1px 0 #0030c8; }
.disk { left: 73px; top: 21px; }
.mycomputer { left: 351px; top: 114px; }
.inactive { background: #7080d8; box-shadow: inset -1px -1px #5560b8, inset 1px 0 #6078d0; }
.title { display: flex; align-items: center; gap: 1px; height: 22px; margin: 0 -3px; padding: 2px 4px 0 5px; border-radius: 6px 6px 0 0; background: linear-gradient(#0038c0, #2a8cff 2px, #0058e8 5px, #0055e5 12px, #0066ff 18px, #0048d0); color: #fff; }
.inactive .title { background: linear-gradient(#6a80cc, #9db8f0 2px, #7a94dc 5px, #7a96e0 12px, #86a4ea 18px, #7088d8); color: #dce6fa; }
.title h2 { flex: 1; padding-left: 1px; font-size: 9px; line-height: 14px; }
.title button svg { width: 16px; height: 16px; }
.close { color: #dc4a26; }
.inactive .close { color: #b46a7c; }
.inactive .title button { opacity: .85; }
.menu { display: flex; gap: 11px; height: 17px; padding-left: 7px; border-bottom: 1px solid #d6d2be; background: #f0ede4; }
.menu button { line-height: 18px; }
.inactive .menu { color: #a5a294; }
.brand { margin-left: auto; width: 28px; background: #fbfdfb; }
.brand svg { width: 16px; height: 14px; margin: 1px 6px; }
.toolbar { display: flex; align-items: center; height: 30px; padding-left: 6px; border-bottom: 1px solid #cfcbb4; background: linear-gradient(#f2eee4, #e6e4d2); }
.tool { display: flex; align-items: center; gap: 3px; line-height: 12px; }
.off { color: #aaa798; }
.drop { width: 21px; height: 18px; display: flex; align-items: center; justify-content: center; }
.drop svg, .caret { width: 5px; height: 3px; }
.short { width: 18px; }
.sep { width: 1px; height: 26px; margin: 0 5px 0 4px; background: #cbc6a8; }
.folders { margin: 0 5px 0 8px; }
.address { display: flex; height: 17px; background: #ebe8d8; }
.address label { width: 29px; padding-left: 4px; line-height: 18px; color: #8f8c7e; }
.field { flex: 1; display: flex; align-items: center; gap: 1px; padding: 0 1px 0 2px; border: 1px solid #7f9db9; background: #f8fdf9; }
.field input { flex: 1; min-width: 0; height: 15px; padding: 1px 0 0; border: 0; outline: 0; background: none; font: inherit; color: #000; }
.pick { width: 11px; height: 13px; background: #c2d3f8; }
.go { display: flex; align-items: center; gap: 3px; width: 54px; padding-left: 5px; }
.go svg { width: 14px; height: 14px; }
.explorer { flex: 1; display: flex; min-height: 0; background: #f8fdf9; }

/* task pane */
aside { display: flex; flex-direction: column; gap: 11px; width: 164px; padding: 9px 9px 9px 10px; background: linear-gradient(#7597e3, #6373d6); }
.panel { border: 1px solid #f4f8ff; border-top: 0; border-radius: 3px 3px 0 0; background: #d2ddf1; color: #2a5bc8; }
.panel h3 { display: flex; align-items: center; justify-content: space-between; height: 19px; padding: 2px 3px 0 8px; border-radius: 3px 3px 0 0; background: linear-gradient(90deg, #fff 40%, #c8d5f5); color: #2257c4; }
.panel h3 svg { width: 13px; height: 13px; margin-bottom: 2px; }
.primary { background: #e8f0fb; }
.primary h3 { background: linear-gradient(90deg, #0b45b4, #2c5cca); color: #fff; }
.panel ul { display: flex; flex-direction: column; gap: 3px; padding: 6px 18px 8px 8px; }
.panel li { display: flex; gap: 5px; min-height: 12px; }
.panel a { padding-top: 2px; margin-bottom: -2px; color: inherit; text-decoration: none; }
.panel p { padding: 7px 8px; color: #111; }

/* file views */
.files { flex: 1; display: flex; flex-direction: column; align-items: flex-start; gap: 14px; padding: 8px; }
.files button { display: flex; align-items: center; gap: 7px; }
.files svg { width: 28px; height: 28px; }
.groups { flex: 1; }
.group { height: 88px; }
.group h3 { height: 15px; padding-left: 10px; line-height: 15px; border-bottom: 1px solid; border-image: linear-gradient(90deg, #9cc3f5, transparent 210px) 1; }
.tiles { display: flex; padding: 9px 9px 0; }
.tile { display: flex; flex-direction: column; align-items: center; gap: 5px; width: 56px; line-height: 10px; }
.tile svg { width: 24px; height: 24px; }
.small.tile svg { width: 20px; }
.status { display: flex; align-items: center; height: 17px; padding-top: 2px; border-top: 1px solid #b5b29f; background: #e9e7d6; }
.status i { flex: 1; height: 12px; border-right: 1px solid #d2cfbc; margin-right: 58px; }
.zone { display: flex; gap: 2px; align-items: center; width: 151px; padding-left: 4px; border-left: 1px solid #cfccb8; }
.grip { align-self: flex-end; width: 8px; height: 8px; margin: 0 2px 2px; }
.pointer { position: absolute; left: 648px; top: 321px; width: 8px; height: 12px; }

/* taskbar */
.taskbar { display: flex; align-items: stretch; height: 22px; background: linear-gradient(#3f7fee, #245edb 4px, #2560dd 18px, #1a44a8); }
.start { display: flex; align-items: center; gap: 3px; width: 74px; padding-left: 7px; border-radius: 0 6px 6px 0; background: linear-gradient(#6cbb64, #3c973c 4px, #3a963a 16px, #2a702a); font: italic 600 12px/20px "Open Sans", sans-serif; box-shadow: inset -2px 0 2px #1f5f24; }
.start svg { width: 16px; height: 14px; }
.quick { display: flex; align-items: center; gap: 6px; width: 76px; padding-left: 8px; }
.quick span { align-self: flex-start; padding-left: 2px; }
.task { display: flex; align-items: center; gap: 2px; width: 119px; margin: 1px 1px 1px 0; padding-left: 7px; border-radius: 2px; background: linear-gradient(#5c96f7, #3b80f1 3px, #3579ea); }
.pressed { background: #1b4bb4; }
.lang { display: flex; align-items: center; gap: 5px; margin-left: auto; padding-right: 10px; }
.tray { display: flex; align-items: center; gap: 2px; width: 110px; padding-left: 6px; border-left: 1px solid #0a3c9c; background: linear-gradient(#22b4f5, #1290e8 4px, #1290e8 17px, #0f6fc0); }
.tray time { margin-left: 2px; }

/* player controls */
.controls { flex: none; height: 61px; padding: 2px 0 0 1px; background: linear-gradient(#fff, #f0f0f0); font-size: 12px; }
.row { display: flex; align-items: center; padding-right: 1px; border-top: 1px solid #ccc; }
.row time { width: 47px; font-size: 14px; }
.group-buttons { display: flex; height: 30px; border: 1px solid #ccc; border-radius: 3px; background: #fff; }
.group-buttons button { display: flex; align-items: center; gap: 3px; padding: 0 10px; }
.group-buttons .roomy { gap: 6px; }
.group-buttons button + button { border-left: 1px solid #ccc; }
.group-buttons svg { height: 12px; fill: #333; }
.group-buttons .line { fill: none; stroke: #333; stroke-width: 1.2; }
.timeline { position: relative; flex: 1; height: 20px; }
.timeline input { display: block; width: 100%; height: 20px; margin: 0; appearance: none; border-radius: 4px; background: #5d93c6; }
.timeline input::-webkit-slider-thumb { appearance: none; width: 10px; height: 20px; background: #4b7ba8; border-radius: 0 4px 4px 0; }
.mark { position: absolute; left: 87%; top: 0; width: 2px; height: 20px; background: #3c6386; }
.light-mark { left: 98%; width: 4px; background: #93b8da; }
.end { position: absolute; right: 1px; top: 3px; width: 9px; height: 14px; fill: #33526e; }
.second { justify-content: space-between; border: 0; padding: 0; }
.live { padding-top: 2px; }
```
